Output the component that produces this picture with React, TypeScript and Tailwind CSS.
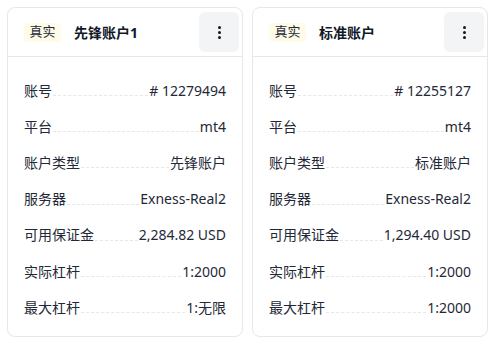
const ACCOUNTS = [
  {
    name: "先锋账户1",
    rows: [
      ["账号", "# 12279494"],
      ["平台", "mt4"],
      ["账户类型", "先锋账户"],
      ["服务器", "Exness-Real2"],
      ["可用保证金", "2,284.82 USD"],
      ["实际杠杆", "1:2000"],
      ["最大杠杆", "1:无限"],
    ],
  },
  {
    name: "标准账户",
    rows: [
      ["账号", "# 12255127"],
      ["平台", "mt4"],
      ["账户类型", "标准账户"],
      ["服务器", "Exness-Real2"],
      ["可用保证金", "1,294.40 USD"],
      ["实际杠杆", "1:2000"],
      ["最大杠杆", "1:2000"],
    ],
  },
];

function AccountCard({ name, rows }: { name: string; rows: string[][] }) {
  return (
    <div className="w-[236px] h-[330px] shrink-0 rounded-lg border border-[#e5e7eb] bg-white flex flex-col">
      {/* header */}
      <div className="h-[49px] flex items-center pl-4 pr-[3px] border-b border-[#e5e7eb]">
        <span className="h-[19px] w-[37px] flex items-center justify-center bg-[#fefbe8] text-[13px] text-[#1f2937] rounded-sm">
          真实
        </span>
        <span className="ml-[13px] text-[14px] font-bold text-[#111827] flex-1">{name}</span>
        <button className="w-10 h-10 rounded-md bg-[#f3f4f6] flex flex-col items-center justify-center gap-[2px]">
          <span className="w-[3px] h-[3px] rounded-full bg-[#111827]" />
          <span className="w-[3px] h-[3px] rounded-full bg-[#111827]" />
          <span className="w-[3px] h-[3px] rounded-full bg-[#111827]" />
        </button>
      </div>

      {/* rows */}
      <div className="flex flex-col pt-[15px] px-4">
        {rows.map(([label, value]) => (
          <div key={label} className="h-[36.2px] flex items-center text-[14px] text-[#1f2937]">
            <span>{label}</span>
            <span className="flex-1 mx-[1px] self-center mt-[11px] border-b border-dashed border-[#e5e7eb]" />
            <span>{value}</span>
          </div>
        ))}
      </div>
    </div>
  );
}

export default function App() {
  return (
    <div
      className="w-[493px] h-[338px] bg-white overflow-hidden flex gap-[9px] pl-[7px] pt-[7px]"
      style={{ fontFamily: '"Noto Sans", "Noto Sans CJK SC", sans-serif' }}
    >
      {ACCOUNTS.map((a) => (
        <AccountCard key={a.name} name={a.name} rows={a.rows} />
      ))}
    </div>
  );
}
